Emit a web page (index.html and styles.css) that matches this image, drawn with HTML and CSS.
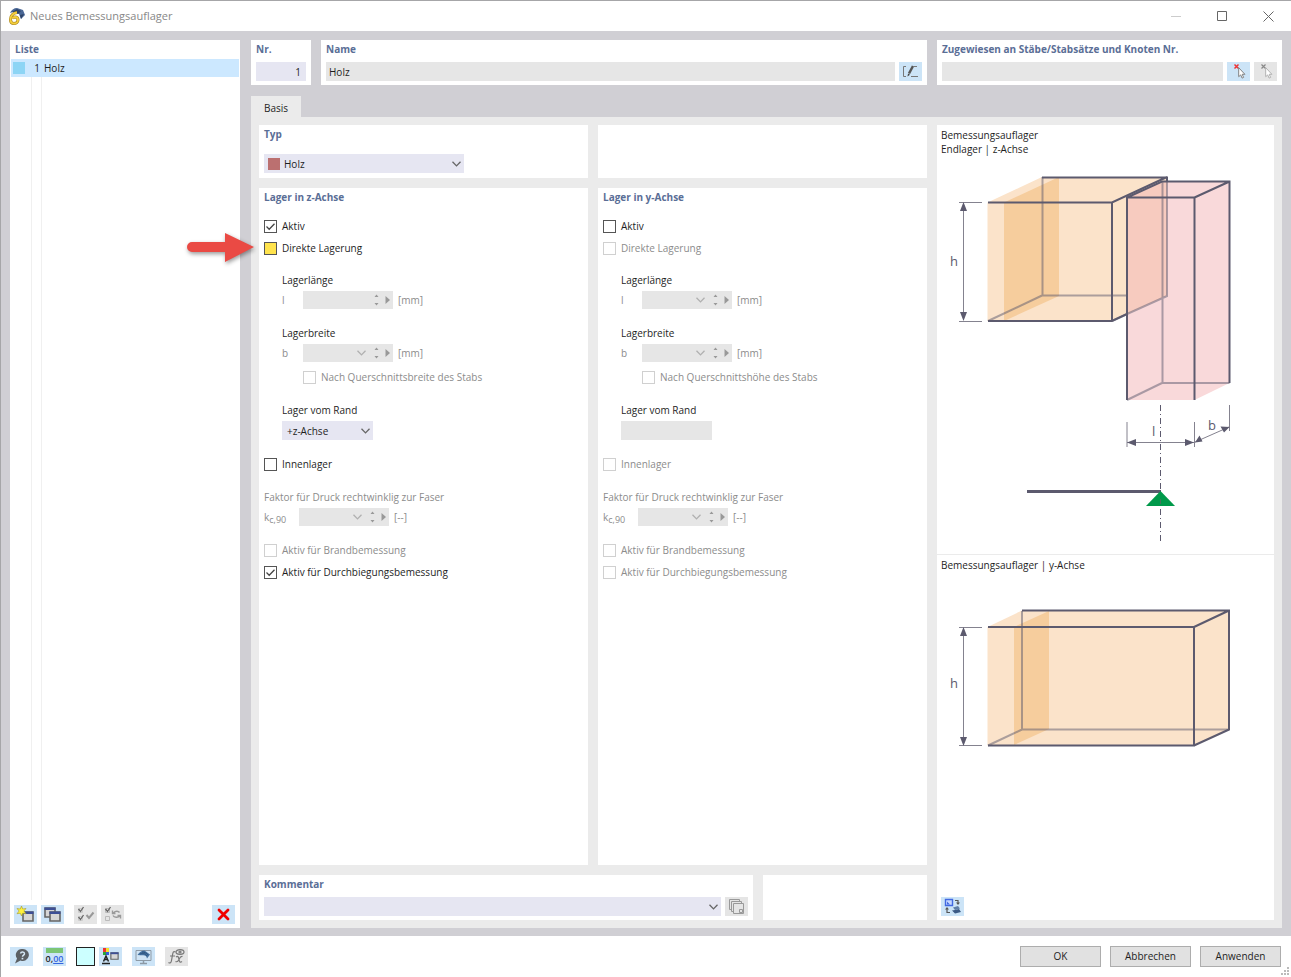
FILE: index.html
```html
<!DOCTYPE html>
<html lang="de">

<head>
    <meta charset="UTF-8">
    <meta name="viewport" content="width=device-width, initial-scale=1.0">
    <title>Neues Bemessungsauflager</title>
    <link rel="stylesheet" href="styles.css">
</head>

<body>
    <!-- shared glyphs -->
    <svg class="sprite" aria-hidden="true">
        <symbol id="chevron" viewBox="0 0 9 6"><path d="M.5.7 4.5 4.9 8.5.7" fill="none" stroke="currentColor" stroke-width="1.3" /></symbol>
        <symbol id="updown" viewBox="0 0 5 12"><path d="M.5 3 2.5.5 4.5 3zM.5 9 2.5 11.5 4.5 9z" fill="currentColor" /></symbol>
        <symbol id="play" viewBox="0 0 5 8"><path d="M.5 0 5 4 .5 8z" fill="currentColor" /></symbol>
        <symbol id="win" viewBox="0 0 12 11">
            <path d="M1 1h10v9H1z" fill="#d6d6d6" stroke="#666" stroke-width="1.6" />
            <path d="M.5.5h11v2.500H.5z" fill="#3d4f96" />
        </symbol>
        <symbol id="cursor" viewBox="0 0 8 12"><path d="M.7.7v9l2-1.800 1.400 3.200 1.500-.7-1.400-3.100h2.700z" fill="#fff" stroke="currentColor" stroke-width=".9" /></symbol>
    </svg>

    <div class="window">
        <header class="titlebar">
            <svg class="logo" width="17" height="17" viewBox="0 0 17 17">
                <path d="M2 5C3 2 6 0 9 0l6 2 2 5-4 4-2-5-6-2z" fill="#4a6796" />
                <path d="M4 4l5-3 4 2-3 3zM12 7l4-1-3 5z" fill="#2f4468" />
                <path d="M9 4.500C5 5 2.500 8 2.500 11.500c0 2.500 1.500 4 3.500 4s4-1.500 4-3.500-1.300-3-3-3c-1.200 0-2 .6-2.500 1.500" fill="none" stroke="#a88420" stroke-width="3" />
                <path d="M9 4.500C5 5 2.500 8 2.500 11.500c0 2.500 1.500 4 3.500 4s4-1.500 4-3.500-1.300-3-3-3c-1.200 0-2 .6-2.500 1.500" fill="none" stroke="#f5cf3b" stroke-width="1.800" />
            </svg>
            <h1>Neues Bemessungsauflager</h1>
            <div class="win-buttons">
                <button type="button" aria-label="Minimieren" disabled><svg width="11" height="11" viewBox="0 0 11 11"><path d="M0 5.500h10" stroke="#ccc" /></svg></button>
                <button type="button" aria-label="Maximieren"><svg width="11" height="11" viewBox="0 0 11 11"><path d="M.5.500h9v9h-9z" fill="none" stroke="#666" /></svg></button>
                <button type="button" aria-label="Schließen"><svg width="11" height="11" viewBox="0 0 11 11"><path d="M.5.500l10 10M10.500.500l-10 10" stroke="#666" /></svg></button>
            </div>
        </header>

        <main class="workspace">
            <section class="panel list-panel">
                <h2>Liste</h2>
                <ul class="list">
                    <li class="selected">
                        <span class="swatch blue"></span>
                        <span class="no">1</span>
                        <span>Holz</span>
                    </li>
                </ul>
                <div class="list-tools">
                    <button type="button" class="tool" aria-label="Neu">
                        <svg width="19" height="17" viewBox="0 0 19 17">
                            <use href="#win" x="6" y="5" width="12" height="11" />
                            <path d="M5.500 0 6.700 3 10 2.500 7.900 5 10 7.700 6.700 7.200 5.500 10 4.300 7.200 1 7.700 3.100 5 1 2.500 4.300 3z" fill="#fff23a" stroke="#a59a2c" stroke-width=".6" />
                        </svg>
                    </button>
                    <button type="button" class="tool" aria-label="Kopieren">
                        <svg width="19" height="17" viewBox="0 0 19 17">
                            <use href="#win" x="1" y="1" width="12" height="11" />
                            <use href="#win" x="6" y="5" width="12" height="11" />
                        </svg>
                    </button>
                    <button type="button" class="tool gray gap" aria-label="Alle auswählen" disabled>
                        <svg width="19" height="17" viewBox="0 0 19 17" fill="none" stroke="#666" stroke-width="1.300">
                            <path d="M2.500 2.500h4v4h-4zM2.500 10.500h4v4h-4z" stroke="#ccc" stroke-width="1" />
                            <path d="M2.500 3l2 2.500 3-4.500M2.500 11l2 2.500 3-4.500" />
                            <path d="M10.500 9l2.500 3 4.500-5.500" stroke="#999" stroke-width="2" />
                        </svg>
                    </button>
                    <button type="button" class="tool gray" aria-label="Auswahl umkehren" disabled>
                        <svg width="19" height="17" viewBox="0 0 19 17" fill="none" stroke="#666" stroke-width="1.300">
                            <path d="M2.500 2.500h4v4h-4zM2.500 10.500h4v4h-4z" stroke="#bbb" stroke-width="1" />
                            <path d="M2.500 3l2 2.500 3-4.500" />
                            <path d="M16.500 6.500c-1-1.500-4-2-6 .5M9.500 4.500v3h3M10 9.500c1 2 5 2.500 7 .5M17.500 12.500v-3h-3" stroke="#999" stroke-width="1.400" />
                        </svg>
                    </button>
                    <button type="button" class="tool delete" aria-label="Löschen">
                        <svg width="13" height="13" viewBox="0 0 13 13"><path d="M2 2l9 9M11 2l-9 9" stroke="#f00000" stroke-width="2.800" stroke-linecap="round" /></svg>
                    </button>
                </div>
            </section>

            <div class="editor">
                <div class="head">
                    <section class="panel">
                        <h2><label for="nr">Nr.</label></h2>
                        <div class="line"><input id="nr" class="box lilac number" type="text" value="1"></div>
                    </section>
                    <section class="panel">
                        <h2><label for="name">Name</label></h2>
                        <div class="line">
                            <input id="name" class="box" type="text" value="Holz">
                            <button type="button" class="tool" aria-label="Name bearbeiten">
                                <svg width="17" height="15" viewBox="0 0 17 15" fill="none" stroke="#777">
                                    <path d="M4 2.500H1.500v10H4M12 2.500h3M9 12.500h7" />
                                    <path d="M7 9.500 11 2" stroke="#555" stroke-width="2.500" />
                                    <path d="M5.500 12.500l.5-3 2 1.200z" fill="#444" stroke="none" />
                                </svg>
                            </button>
                        </div>
                    </section>
                    <section class="panel">
                        <h2><label for="assigned">Zugewiesen an Stäbe/Stabsätze und Knoten Nr.</label></h2>
                        <div class="line">
                            <input id="assigned" class="box" type="text" readonly>
                            <button type="button" class="tool" aria-label="Auswählen">
                                <svg class="muted" width="19" height="17" viewBox="0 0 19 17"><path d="M5.500 1.500l4 4M9.500 1.500l-4 4" stroke="#e33" stroke-width="1.500" /><use href="#cursor" x="9" y="4" width="8" height="12" /></svg>
                            </button>
                            <button type="button" class="tool gray" aria-label="Auswahl aufheben" disabled>
                                <svg class="faint" width="19" height="17" viewBox="0 0 19 17"><path d="M5.500 1.500l4 4M9.500 1.500l-4 4" stroke="#888" stroke-width="1.200" /><use href="#cursor" x="9" y="4" width="8" height="12" /></svg>
                            </button>
                        </div>
                    </section>
                </div>

                <nav class="tabs"><button type="button" class="tab">Basis</button></nav>

                <div class="page">
                    <div class="forms">
                        <section class="panel type">
                            <h2><label for="typ">Typ</label></h2>
                            <div class="select wide">
                                <span class="swatch red"></span>
                                <select id="typ"><option>Holz</option></select>
                                <svg width="9" height="6"><use href="#chevron" /></svg>
                            </div>
                        </section>
                        <section class="panel"></section>

                        <section class="panel support">
                            <h2>Lager in z-Achse</h2>
                            <div class="options">
                                <label class="check"><input type="checkbox" checked>Aktiv</label>
                                <div class="marked">
                                    <label class="check"><input type="checkbox" class="highlight">Direkte Lagerung</label>
                                    <svg class="arrow" width="74" height="38" viewBox="0 0 74 38">
                                        <path d="M7 13h33V4l29 14-29 15v-10H7a5 5 0 0 1 0-10z" fill="#ea4a44" />
                                    </svg>
                                </div>
                            </div>
                            <div class="group indent">
                                <label for="z-l">Lagerlänge</label>
                                <div class="field">
                                    <span class="symbol">l</span>
                                    <div class="spin">
                                        <input id="z-l" type="text" disabled>
                                        <button type="button" aria-label="Wert ändern" disabled><svg width="5" height="12"><use href="#updown" /></svg></button>
                                        <button type="button" aria-label="Mehr" disabled><svg width="5" height="8"><use href="#play" /></svg></button>
                                    </div>
                                    <span>[mm]</span>
                                </div>
                            </div>
                            <div class="group indent">
                                <label for="z-b">Lagerbreite</label>
                                <div class="field">
                                    <span class="symbol">b</span>
                                    <div class="spin">
                                        <input id="z-b" type="text" disabled>
                                        <button type="button" class="drop" aria-label="Liste" disabled><svg width="9" height="6"><use href="#chevron" /></svg></button>
                                        <button type="button" aria-label="Wert ändern" disabled><svg width="5" height="12"><use href="#updown" /></svg></button>
                                        <button type="button" aria-label="Mehr" disabled><svg width="5" height="8"><use href="#play" /></svg></button>
                                    </div>
                                    <span>[mm]</span>
                                </div>
                                <label class="check off sub"><input type="checkbox" disabled>Nach Querschnittsbreite des Stabs</label>
                            </div>
                            <div class="group indent">
                                <label for="z-rand">Lager vom Rand</label>
                                <div class="select">
                                    <select id="z-rand"><option>+z-Achse</option></select>
                                    <svg width="9" height="6"><use href="#chevron" /></svg>
                                </div>
                            </div>
                            <div class="group">
                                <label class="check"><input type="checkbox">Innenlager</label>
                            </div>
                            <div class="group">
                                <label for="z-k" class="off">Faktor für Druck rechtwinklig zur Faser</label>
                                <div class="field">
                                    <span class="symbol factor">k<small>c,90</small></span>
                                    <div class="spin">
                                        <input id="z-k" type="text" disabled>
                                        <button type="button" class="drop" aria-label="Liste" disabled><svg width="9" height="6"><use href="#chevron" /></svg></button>
                                        <button type="button" aria-label="Wert ändern" disabled><svg width="5" height="12"><use href="#updown" /></svg></button>
                                        <button type="button" aria-label="Mehr" disabled><svg width="5" height="8"><use href="#play" /></svg></button>
                                    </div>
                                    <span>[--]</span>
                                </div>
                            </div>
                            <div class="options">
                                <label class="check off"><input type="checkbox" disabled>Aktiv für Brandbemessung</label>
                                <label class="check"><input type="checkbox" checked>Aktiv für Durchbiegungsbemessung</label>
                            </div>
                        </section>

                        <section class="panel support">
                            <h2>Lager in y-Achse</h2>
                            <div class="options">
                                <label class="check"><input type="checkbox">Aktiv</label>
                                <label class="check off"><input type="checkbox" disabled>Direkte Lagerung</label>
                            </div>
                            <div class="group indent">
                                <label for="y-l">Lagerlänge</label>
                                <div class="field">
                                    <span class="symbol">l</span>
                                    <div class="spin">
                                        <input id="y-l" type="text" disabled>
                                        <button type="button" class="drop" aria-label="Liste" disabled><svg width="9" height="6"><use href="#chevron" /></svg></button>
                                        <button type="button" aria-label="Wert ändern" disabled><svg width="5" height="12"><use href="#updown" /></svg></button>
                                        <button type="button" aria-label="Mehr" disabled><svg width="5" height="8"><use href="#play" /></svg></button>
                                    </div>
                                    <span>[mm]</span>
                                </div>
                            </div>
                            <div class="group indent">
                                <label for="y-b">Lagerbreite</label>
                                <div class="field">
                                    <span class="symbol">b</span>
                                    <div class="spin">
                                        <input id="y-b" type="text" disabled>
                                        <button type="button" class="drop" aria-label="Liste" disabled><svg width="9" height="6"><use href="#chevron" /></svg></button>
                                        <button type="button" aria-label="Wert ändern" disabled><svg width="5" height="12"><use href="#updown" /></svg></button>
                                        <button type="button" aria-label="Mehr" disabled><svg width="5" height="8"><use href="#play" /></svg></button>
                                    </div>
                                    <span>[mm]</span>
                                </div>
                                <label class="check off sub"><input type="checkbox" disabled>Nach Querschnittshöhe des Stabs</label>
                            </div>
                            <div class="group indent">
                                <label for="y-rand">Lager vom Rand</label>
                                <div class="select disabled"><select id="y-rand" disabled><option></option></select></div>
                            </div>
                            <div class="group">
                                <label class="check off"><input type="checkbox" disabled>Innenlager</label>
                            </div>
                            <div class="group">
                                <label for="y-k" class="off">Faktor für Druck rechtwinklig zur Faser</label>
                                <div class="field">
                                    <span class="symbol factor">k<small>c,90</small></span>
                                    <div class="spin">
                                        <input id="y-k" type="text" disabled>
                                        <button type="button" class="drop" aria-label="Liste" disabled><svg width="9" height="6"><use href="#chevron" /></svg></button>
                                        <button type="button" aria-label="Wert ändern" disabled><svg width="5" height="12"><use href="#updown" /></svg></button>
                                        <button type="button" aria-label="Mehr" disabled><svg width="5" height="8"><use href="#play" /></svg></button>
                                    </div>
                                    <span>[--]</span>
                                </div>
                            </div>
                            <div class="options">
                                <label class="check off"><input type="checkbox" disabled>Aktiv für Brandbemessung</label>
                                <label class="check off"><input type="checkbox" disabled>Aktiv für Durchbiegungsbemessung</label>
                            </div>
                        </section>

                        <div class="comment-row">
                            <section class="panel">
                                <h2><label for="comment">Kommentar</label></h2>
                                <div class="line">
                                    <div class="select fill">
                                        <select id="comment"><option></option></select>
                                        <svg width="9" height="6"><use href="#chevron" /></svg>
                                    </div>
                                    <button type="button" class="tool gray" aria-label="Kommentare" disabled>
                                        <svg width="17" height="17" viewBox="0 0 17 17" fill="#e5e5e5" stroke="#999">
                                            <path d="M1.500 1.500h10v10h-10z" />
                                            <path d="M3.500 3.500h10v10h-10z" />
                                            <path d="M5.500 5.500h10v10h-10z" />
                                            <path d="M11.500 11.500h3v3h-3z" />
                                        </svg>
                                    </button>
                                </div>
                            </section>
                            <section class="panel"></section>
                        </div>
                    </div>

                    <aside class="panel preview">
                        <figure>
                            <figcaption>Bemessungsauflager<br>Endlager | z-Achse</figcaption>
                            <svg width="337" height="394" viewBox="937 160 337 394">
                                <!-- beam -->
                                <path d="M987.500 202.500 1042 177h125v118.500L1112 321H987.500z" fill="#fbe3ca" />
                                <path d="M1004 202.500 1059 177v119l-55 25z" fill="#f6cd9d" />
                                <path d="M1042.500 177v118.500H1167M1042 295.500 988 321M1112 321l55-25.500V177" class="edge back" />
                                <path d="M1042 177.500h125v5M988 202.500h124L1167 177M1112 202v119M988 321h124l15-7" class="edge" />
                                <!-- column -->
                                <path d="M1127 197.500l35-16h67.500V383l-35 17H1127z" fill="#f9d9da" />
                                <path d="M1127 197.500l35-16h5v114l-40 18.500z" fill="#f7cbbf" />
                                <path d="M1162.500 182v201h67M1162 383l-35 17M1167 182v114l-40 18" class="edge back" />
                                <path d="M1127 400V197.500l35-16h67.500V383M1127 197.500h67.500V400M1194.500 197.500l35-16" class="edge" />
                                <!-- dimensions -->
                                <path d="M959 202.500h23M959 321.500h23M963.500 204v116M1127 422v25M1194.500 422v25M1229.500 405v26M1127 442.500h67l35-15.500" class="dim" />
                                <path d="M963.500 202l3.500 9h-7zM963.500 321l3.500-9h-7zM1127 442.500l9-3.500v7zM1194 442.500l-9-3.500v7zM1195 442.500l4.500-7 3 6zM1229.500 427l-9-.5 3.500 6z" class="tip" />
                                <path d="M1160.500 405v138" class="axis" />
                                <text x="950" y="266">h</text>
                                <text x="1152" y="436">l</text>
                                <text x="1208" y="430">b</text>
                                <!-- static system -->
                                <path d="M1027 491.500h134" stroke="#5c5a6e" stroke-width="3" />
                                <path d="M1160.500 491l14.500 15h-29z" fill="#00994a" />
                                <path d="M1160.500 499v5" stroke="#47715b" />
                            </svg>
                        </figure>
                        <figure>
                            <figcaption>Bemessungsauflager | y-Achse</figcaption>
                            <svg width="337" height="180" viewBox="937 576 337 180">
                                <path d="M987.500 627l34.500-16.500h207v119l-35 16H987.500z" fill="#fbe3ca" />
                                <path d="M1014 627l35-16v118l-35 16z" fill="#f6cd9d" />
                                <path d="M1022 611v118.500h207M1022 729.500l-34 16" class="edge back" />
                                <path d="M988 627h206v118.500H988M1022 610.500h207v119l-35 16M1194 627l35-16.500" class="edge" />
                                <path d="M959 627.500h23M959 745.500h23M963.500 629v116" class="dim" />
                                <path d="M963.500 627l3.500 9h-7zM963.500 746l3.500-9h-7z" class="tip" />
                                <text x="950" y="688">h</text>
                            </svg>
                        </figure>
                        <button type="button" class="tool" aria-label="Darstellung wechseln">
                            <svg width="19" height="17" viewBox="0 0 19 17">
                                <path d="M2.500 1.500h7v6h-7z" fill="#c6d8ff" stroke="#4169e1" stroke-width="1.400" />
                                <path d="M4 6.500v-3l3 3z" fill="#4169e1" />
                                <path d="M12 2.500h3v3M7 14.500H4V11" fill="none" stroke="#555" stroke-width="1.200" />
                                <path d="M13 4.500h4L15 7zM2 11.500h4L4 9z" fill="#555" />
                                <path d="M10 9.500l5-1.500 2 2.500-5 1.500z" fill="#5f7fa8" />
                                <path d="M9 12.500l3 3 6-1.500-2-3-4 1z" fill="#3c5a85" />
                            </svg>
                        </button>
                    </aside>
                </div>
            </div>
        </main>

        <footer class="footer">
            <button type="button" class="tool" aria-label="Hilfe">
                <svg width="17" height="17" viewBox="0 0 17 17">
                    <path d="M9.500 1a6 6 0 1 1-2 11.500L2 15.500l2-5A6 6 0 0 1 9.500 1z" fill="#5c6064" />
                    <path d="M7.500 5.500c.5-2 4-1.800 4 .2 0 1.300-2 1.500-2 3" fill="none" stroke="#d5e7f5" stroke-width="1.500" />
                    <path d="M8.600 9.800h1.700v1.600H8.600z" fill="#d5e7f5" />
                </svg>
            </button>
            <button type="button" class="tool units" aria-label="Einheiten">
                <span class="ruler"></span>
                <span>0,<u>00</u></span>
            </button>
            <span class="color-group">
                <button type="button" class="color" aria-label="Farbe"></button>
                <button type="button" class="tool" aria-label="Anzeigeeigenschaften">
                    <svg width="19" height="17" viewBox="0 0 19 17">
                        <path d="M2 0h3v4H2z" fill="#e33" /><path d="M5 0h3v4H5z" fill="#f4e02a" />
                        <path d="M2 4h3v3H2z" fill="#2aa636" /><path d="M5 4h3v3H5z" fill="#3558d8" />
                        <path d="M2.500 13.500 5 8l2.500 5.500M3.500 11.500h3M1 15.500h8" fill="none" stroke="#222" stroke-width="1.500" />
                        <use href="#win" x="9" y="4" width="9" height="8" />
                    </svg>
                </button>
            </span>
            <button type="button" class="tool" aria-label="Ansicht">
                <svg width="19" height="17" viewBox="0 0 19 17">
                    <path d="M2 2.500h15v10H2z" fill="#cfe4f5" stroke="#8d9aa6" />
                    <path d="M9.500 13v2M6 15.500h7" stroke="#8d9aa6" stroke-width="1.500" />
                    <path d="M3.500 7c2-3 4-4.500 7-4.500l5.500 4-3 4c-.5-2-1.500-3.200-3.500-3.200-2 0-4 0-6-.3z" fill="#44719f" />
                    <path d="M6 6c2-1 5-1 7 2M8 4c2 0 5 1 6 3" fill="none" stroke="#274c75" stroke-width=".7" />
                </svg>
            </button>
            <button type="button" class="tool gray" aria-label="Formel" disabled>
                <svg width="19" height="17" viewBox="0 0 19 17" fill="none" stroke="#777" stroke-width="1.200">
                    <path d="M8.500 4c-2-1.200-2.500 0-3 3l-1 5.500c-.4 2.500-1.500 3-3 2M3 8h5" />
                    <path d="M9 9c2-1.500 2.500 0 3 2.500s1 3.500 3 2M15.500 8.500c-2-.5-3 2-3.500 3s-1.500 3-3.500 2" />
                    <ellipse cx="13" cy="4" rx="4" ry="2.300" /><circle cx="13" cy="4" r="1" />
                </svg>
            </button>
            <div class="actions">
                <button type="button">OK</button>
                <button type="button">Abbrechen</button>
                <button type="button">Anwenden</button>
            </div>
            <svg class="grip" width="9" height="9" viewBox="0 0 9 9"><path d="M6 0h2v2H6zM3 3h2v2H3zM6 3h2v2H6zM0 6h2v2H0zM3 6h2v2H3zM6 6h2v2H6z" fill="#bbb" /></svg>
        </footer>
    </div>
</body>

</html>
```
FILE: styles.css
```css
* {
    box-sizing: border-box;
}

body {
    margin: 0;
    font-family: "Open Sans", "Noto Sans", sans-serif;
    font-size: 10px;
    line-height: 14px;
    color: #1e1e1e;
}

button,
input,
select {
    font: inherit;
    color: inherit;
    margin: 0;
    padding: 0;
    border: 0;
    border-radius: 0;
    background: none;
}

svg {
    display: block;
}

.sprite {
    display: none;
}

.window {
    display: flex;
    flex-direction: column;
    min-height: 100vh;
    border: 1px solid #a6a6a8;
    border-right: 0;
    border-bottom: 0;
}

/* title bar */

.titlebar {
    display: flex;
    align-items: center;
    height: 30px;
    padding-left: 7px;
}

.titlebar h1 {
    margin: 0 0 0 5px;
    font-size: 11px;
    font-weight: normal;
    color: #888;
}

.win-buttons {
    display: flex;
    margin-left: auto;
}

.win-buttons button {
    display: flex;
    align-items: center;
    justify-content: center;
    width: 46px;
    height: 30px;
}

/* work area */

.workspace {
    flex: 1;
    display: flex;
    gap: 11px;
    padding: 9px;
    padding-bottom: 8px;
    background: #d0cfd4;
}

.panel {
    padding: 0 5px;
    background: #fff;
}

.panel h2 {
    margin: 0;
    font-size: 10px;
    line-height: 18px;
    font-weight: 700;
    color: #5a6e96;
}

.list-panel {
    display: flex;
    flex-direction: column;
    flex: 0 0 230px;
    padding: 0;
}

.list-panel h2 {
    padding: 0 5px;
    line-height: 19px;
}

.list {
    flex: 1;
    margin: 0;
    padding: 0;
    list-style: none;
    background: linear-gradient(90deg, transparent 21px, #f0f0f0 21px, #f0f0f0 22px, transparent 22px, transparent 31px, #f0f0f0 31px, #f0f0f0 32px, transparent 32px);
}

.list li {
    display: flex;
    align-items: center;
    height: 18px;
    margin: 0 1px;
    padding-left: 2px;
    gap: 4px;
}

.list .selected {
    background: #cce8ff;
}

.swatch {
    width: 12px;
    height: 12px;
}

.blue {
    background: #8dd5f5;
}

.red {
    background: #bb7070;
}

.no {
    width: 11px;
    text-align: right;
}

.list-tools {
    display: flex;
    gap: 4px;
    padding: 5px 5px 4px 4px;
}

.tool {
    display: flex;
    align-items: center;
    justify-content: center;
    flex: none;
    width: 23px;
    height: 19px;
    background: #cce4f7;
}

.gray {
    background: #e5e5e5;
}

.gap {
    margin-left: 6px;
}

.delete {
    margin-left: auto;
}

.muted {
    color: #777;
}

.faint {
    color: #aaa;
}

/* editor */

.editor {
    flex: 1;
    display: flex;
    flex-direction: column;
    min-width: 0;
}

.head {
    display: grid;
    grid-template-columns: 60px minmax(0, 1fr) 345px;
    gap: 10px;
}

.head .panel {
    height: 45px;
}

.line {
    display: flex;
    gap: 4px;
    margin-top: 4px;
}

.box {
    flex: 1;
    min-width: 0;
    height: 19px;
    padding: 0 3px;
    background: #e6e6e6;
}

.lilac {
    background: #e6e6f2;
}

.number {
    text-align: right;
    padding-right: 5px;
}

.tabs {
    margin-top: 11px;
}

.tab {
    display: block;
    width: 50px;
    height: 21px;
    padding-top: 2px;
    background: #ebebeb;
}

.page {
    flex: 1;
    display: grid;
    grid-template-columns: minmax(0, 1fr) 337px;
    gap: 10px;
    padding: 8px;
    background: #ebebeb;
}

.forms {
    display: grid;
    grid-template-columns: minmax(0, 1fr) minmax(0, 1fr);
    grid-template-rows: 53px 1fr 45px;
    gap: 10px;
}

.select {
    position: relative;
    display: flex;
    align-items: center;
    width: 91px;
    height: 19px;
    background: #e6e6f2;
}

.select select {
    appearance: none;
    width: 100%;
    height: 19px;
    padding: 0 5px;
}

.select svg {
    position: absolute;
    right: 3px;
    color: #666;
    pointer-events: none;
}

.select.disabled {
    background: #e6e6e6;
}

.select.fill {
    flex: 1;
}

.select.wide {
    width: 200px;
    margin-top: 11px;
}

.select.wide select {
    padding-left: 20px;
}

.select .swatch {
    position: absolute;
    left: 4px;
}

/* support settings */

.support h2 {
    margin-bottom: 11px;
}

.options,
.group {
    display: flex;
    flex-direction: column;
    align-items: flex-start;
}

.options {
    gap: 4px;
    margin-bottom: 14px;
}

.group {
    gap: 2px;
    margin-bottom: 15px;
    line-height: 18px;
}

.indent {
    margin-left: 18px;
}

.check {
    display: flex;
    align-items: center;
    gap: 5px;
    height: 18px;
}

.sub {
    margin: 4px 0 0 21px;
}

.off,
.field {
    color: #8c8c8c;
}

.check input {
    appearance: none;
    width: 13px;
    height: 13px;
    border: 1px solid #555;
    background: #fff;
}

.check input:disabled {
    border-color: #d0d0d0;
}

.check input:checked {
    background: url("data:image/svg+xml,%3Csvg xmlns='http://www.w3.org/2000/svg' viewBox='0 0 11 11'%3E%3Cpath d='M1.500 5.500l2.700 2.700 5.300-5.500' fill='none' stroke='%23444' stroke-width='1.300'/%3E%3C/svg%3E");
}

.check input.highlight {
    background: #ffe34d;
}

.marked {
    position: relative;
}

.arrow {
    position: absolute;
    top: -10px;
    left: -79px;
    filter: drop-shadow(1px 2px 2px rgba(0, 0, 0, 0.4));
}

.field {
    display: flex;
    align-items: center;
    height: 18px;
}

.symbol {
    width: 21px;
}

.factor {
    width: 35px;
}

.factor small {
    font-size: 9px;
    position: relative;
    top: 2px;
}

.spin {
    display: flex;
    width: 90px;
    height: 18px;
    margin-right: 5px;
    background: #e6e6e6;
}

.spin input {
    flex: 1;
    min-width: 0;
}

.spin button {
    display: flex;
    align-items: center;
    justify-content: center;
    width: 11px;
    color: #999;
}

.spin .drop {
    width: 19px;
    color: #b0b0b0;
}

/* comment */

.comment-row {
    grid-column: span 2;
    display: grid;
    grid-template-columns: minmax(0, 3fr) minmax(0, 1fr);
    gap: 10px;
}

/* preview */

.preview {
    display: flex;
    flex-direction: column;
    padding: 0;
}

.preview figure {
    margin: 0;
}

.preview figure + figure {
    border-top: 1px solid #ebebeb;
}

.preview figcaption {
    padding: 3px 4px 4px;
}

.preview .tool {
    margin: auto 0 4px 4px;
}

.preview text {
    font-size: 13px;
    fill: #5c5a6e;
}

.edge {
    fill: none;
    stroke: #5c5a6e;
    stroke-width: 2;
}

.edge.back {
    stroke-opacity: 0.5;
    stroke-width: 2;
}

.dim {
    fill: none;
    stroke: #84828f;
    stroke-width: 1;
}

.tip {
    fill: #5c5a6e;
}

.axis {
    stroke: #5c5a6e;
    stroke-width: 1;
    stroke-dasharray: 6 3 1 3;
}

/* footer */

.footer {
    position: relative;
    display: flex;
    align-items: center;
    gap: 10px;
    height: 41px;
    padding: 0 10px 1px 9px;
}

.color-group {
    display: flex;
    gap: 4px;
}

.color {
    width: 19px;
    height: 19px;
    border: 1px solid #222;
    background: #ccffff;
}

.units {
    flex-direction: column;
    font-size: 9px;
    line-height: 11px;
    font-weight: 600;
}

.units u {
    color: #3465e0;
}

.ruler {
    width: 17px;
    height: 5px;
    background: #7cc576;
}

.actions {
    display: flex;
    gap: 9px;
    margin-left: auto;
}

.actions button {
    width: 81px;
    height: 21px;
    border: 1px solid #adadad;
    background: #e1e1e1;
}

.grip {
    position: absolute;
    right: 1px;
    bottom: 1px;
}
```
